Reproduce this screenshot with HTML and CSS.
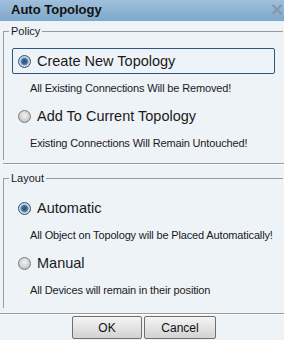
FILE: index.html
```html
<!DOCTYPE html>
<html lang="en">
<head>
  <meta charset="UTF-8" />
  <title>Auto Topology</title>
  <link rel="stylesheet" href="styles.css">
</head>
<body>
  <div class="dialog">
    <div class="titlebar">
      <span class="title">Auto Topology</span>
      <svg class="close" width="12" height="11" viewBox="0 0 12 11">
        <path d="M1.5 1 L10.5 10 M10.5 1 L1.5 10" stroke="#8597a8" stroke-width="2.2" fill="none" />
      </svg>
    </div>

    <fieldset class="group policy">
      <legend>Policy</legend>
      <label class="option selected"><span class="radio on"></span>Create New Topology</label>
      <p class="hint">All Existing Connections Will be Removed!</p>
      <label class="option"><span class="radio"></span>Add To Current Topology</label>
      <p class="hint">Existing Connections Will Remain Untouched!</p>
    </fieldset>
    <div class="sep sep-policy"></div>

    <fieldset class="group layout">
      <legend>Layout</legend>
      <label class="option"><span class="radio on"></span>Automatic</label>
      <p class="hint">All Object on Topology will be Placed Automatically!</p>
      <label class="option"><span class="radio"></span>Manual</label>
      <p class="hint">All Devices will remain in their position</p>
    </fieldset>
    <div class="sep sep-layout"></div>

    <div class="buttons">
      <button class="btn ok">OK</button>
      <button class="btn cancel">Cancel</button>
    </div>
  </div>
</body>
</html>
```

FILE: styles.css
```css
body {
  margin: 0;
  font-family: "Liberation Sans", Arial, sans-serif;
  background-color: #eef3f8;
  color: #1a1a1a;
}
.dialog {
  width: 284px;
  height: 340px;
  overflow: hidden;
  background: #eef3f8;
}
.titlebar {
  height: 21px;
  display: flex;
  align-items: center;
  justify-content: space-between;
  padding: 0 1px 0 11px;
  box-sizing: border-box;
  background: linear-gradient(#a0c0dc, #7da7ca);
}
.title {
  font-size: 13px;
  font-weight: bold;
  color: #111;
  margin-top: -3px;
}
.close {
  margin-top: -3px;
}
.group {
  margin: 4px 1px 0 3px;
  padding: 0;
  border: 1px solid #9a9a9a;
  border-right: none;
  border-bottom: none;
  min-width: 0;
}
.group legend {
  margin-left: 5px;
  padding: 0 2px;
  font-size: 11px;
  line-height: 13px;
}
.policy {
  padding-bottom: 10px;
}
.layout {
  margin-top: 7px;
  padding-bottom: 11px;
}
.option {
  display: flex;
  align-items: center;
  height: 26px;
  margin: 10px 8px 0 8px;
  padding-left: 5px;
  border: 1px solid transparent;
  border-radius: 2px;
  box-sizing: border-box;
  font-size: 14.5px;
}
.option.selected {
  border-color: #2d5680;
}
.hint + .option {
  margin-top: 8px;
}
.radio {
  width: 13px;
  height: 13px;
  margin-right: 6px;
  border-radius: 50%;
  box-sizing: border-box;
  border: 1px solid #7c7c7c;
  background: radial-gradient(circle at 50% 40%, #f2f2f2 0, #d2d2d2 55%, #a8a8a8 100%);
}
.radio.on {
  border-color: #34536f;
  background: radial-gradient(circle, #24527e 0, #3a6a96 2.5px, #6f93b5 3.5px, #d5e0ea 4.5px, #a9bccd 6.5px);
}
.hint {
  margin: 8px 0 0 26px;
  font-size: 11px;
  line-height: 13px;
  letter-spacing: -0.15px;
}
.sep {
  height: 1px;
  background: #9a9a9a;
  border-bottom: 1px solid #ffffff;
}
.sep-policy {
  margin: 3px 0 0 3px;
}
.sep-layout {
  margin-top: 5px;
}
.buttons {
  display: flex;
  justify-content: center;
  gap: 2px;
  margin-top: 1px;
  padding-left: 4px;
}
.btn {
  height: 23px;
  padding: 0;
  font-family: "Liberation Sans", Arial, sans-serif;
  font-size: 12px;
  color: #111;
  border: 1px solid #707070;
  border-radius: 2px;
  background: linear-gradient(#f4f4f4, #e4e4e4 50%, #d2d2d2);
}
.ok {
  width: 70px;
}
.cancel {
  width: 72px;
}
```
